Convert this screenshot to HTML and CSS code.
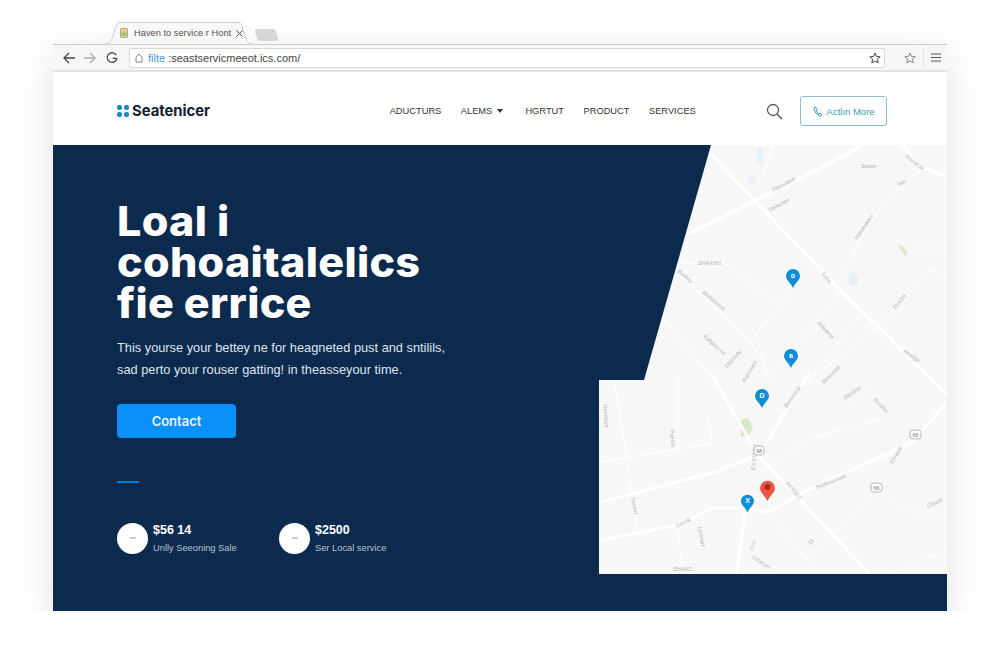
FILE: index.html
```html
<!DOCTYPE html>
<html lang="en">
<head>
    <meta charset="UTF-8">
    <meta name="viewport" content="width=device-width, initial-scale=1.0">
    <title>Haven to service r Hont</title>
    <link rel="stylesheet" href="styles.css">
</head>
<body>
    <div class="tabs">
        <div class="tab">
            <svg class="tab-shape" width="148" height="22" viewBox="0 0 148 22"><path d="M0 22C5 22 6 19 8 14L11 4C12 1.500 13 .5 16 .5H132C135 .5 136 1.500 137 4L141 16C142 20 144 22 148 22" fill="#f8f8f8" stroke="#cfcfcf"/></svg>
            <svg class="favicon" width="8" height="10" viewBox="0 0 8 10"><rect x="0.5" y="0.5" width="7" height="9" rx="1" fill="#e9d27c" stroke="#9a9a80" stroke-width="0.8"/><rect x="1.500" y="4.500" width="5" height="3.500" fill="#9cc07a"/></svg>
            <span class="tab-title">Haven to service r Hont</span>
            <svg class="tab-close" width="7" height="7" viewBox="0 0 7 7"><path d="M.5.5l6 6M6.500.5l-6 6" stroke="#444" stroke-width="1"/></svg>
        </div>
        <div class="tab-new"></div>
    </div>

    <div class="window">
        <div class="toolbar">
            <svg class="tool-icon" width="14" height="14" viewBox="0 0 14 14"><path d="M13 7H2M7 2L2 7l5 5" fill="none" stroke="#444" stroke-width="1.300"/></svg>
            <svg class="tool-icon" width="12" height="12" viewBox="0 0 12 12"><path d="M0 6h11M6 1l5 5-5 5" fill="none" stroke="#aaa" stroke-width="1.300"/></svg>
            <svg class="tool-icon reload" width="12" height="12" viewBox="0 0 13 13"><path d="M11.200 3.600A5.200 5.200 0 1 0 11.700 7H7.200" fill="none" stroke="#444" stroke-width="1.400"/></svg>
            <div class="address">
                <svg width="8" height="10" viewBox="0 0 8 10"><path d="M1 4l3-3 3 3v5H1z" fill="none" stroke="#777" stroke-width="0.9"/></svg>
                <span class="url"><span class="url-scheme">filte</span> :seastservicmeeot.ics.com/</span>
                <svg class="address-star" width="12" height="12" viewBox="0 0 12 12"><path d="M6 1l1.500 3.400 3.700.4-2.800 2.400.8 3.600L6 9l-3.200 1.800.8-3.600L.8 4.800l3.700-.4z" fill="none" stroke="#444" stroke-width="1"/></svg>
            </div>
            <svg class="ext-star" width="12" height="12" viewBox="0 0 12 12"><path d="M6 1l1.500 3.400 3.700.4-2.800 2.400.8 3.600L6 9l-3.200 1.800.8-3.600L.8 4.800l3.700-.4z" fill="none" stroke="#888" stroke-width="1"/></svg>
            <div class="menu-btn">
                <svg width="10" height="9" viewBox="0 0 10 9"><path d="M0 1h10M0 4.500h10M0 8h10" stroke="#555" stroke-width="1.200"/></svg>
            </div>
        </div>

        <header class="site-nav">
            <div class="logo">
                <span class="logo-mark"><i></i><i></i><i></i><i></i></span>
                Seatenicer
            </div>
            <nav class="nav-links">
                <a>ADUCTURS</a>
                <a>ALEMS <span class="caret"></span></a>
                <a>HGRTUT</a>
                <a>PRODUCT</a>
                <a>SERVICES</a>
            </nav>
            <svg class="search" width="17" height="17" viewBox="0 0 17 17"><circle cx="7" cy="7" r="5.500" fill="none" stroke="#555" stroke-width="1.300"/><path d="M11 11l5 5" stroke="#555" stroke-width="1.500"/></svg>
            <a class="action-btn">
                <svg width="10" height="11" viewBox="0 0 10 11"><path d="M2 1c-1 .6-1.200 1.800-.6 3.200C2.200 6.400 4 8.600 6.500 9.600c1 .4 2 .2 2.500-.6L7 7.200l-1.200.7C4.600 7 3.600 5.600 3.300 4.300l1-.9z" fill="none" stroke="#2b8fa8" stroke-width="1"/></svg>
                Actlın More
            </a>
        </header>

        <section class="hero">
            <div class="hero-copy">
                <h1>Loal i<br>cohoaitalelics<br>fie errice</h1>
                <p>This yourse your bettey ne for heagneted pust and sntilils,<br>sad perto your rouser gatting! in theasseyour time.</p>
                <a class="contact-btn">Contact</a>
                <div class="divider"></div>
                <div class="stats">
                    <div class="stat">
                        <span class="stat-icon"><i></i></span>
                        <div>
                            <strong>$56 14</strong>
                            <small>Unlly Seeoning Sale</small>
                        </div>
                    </div>
                    <div class="stat">
                        <span class="stat-icon"><i></i></span>
                        <div>
                            <strong>$2500</strong>
                            <small>Ser Local service</small>
                        </div>
                    </div>
                </div>
            </div>

            <svg class="map" width="348" height="429" viewBox="599 145 348 429">
                <defs>
                    <clipPath id="map-shape"><polygon points="711,145 947,145 947,574 599,574 599,380 644,380"/></clipPath>
                    <symbol id="pin" viewBox="0 0 14 19">
                        <path d="M7 0a7 7 0 0 1 7 7c0 4-4.500 6.500-7 12C4.500 13.500 0 11 0 7a7 7 0 0 1 7-7z"/>
                    </symbol>
                </defs>
                <g clip-path="url(#map-shape)">
                    <rect x="599" y="145" width="348" height="429" fill="#f7f7f8"/>
                    <!-- water and parks -->
                    <rect x="757" y="147" width="6" height="16" rx="3" fill="#e8f0f6"/>
                    <circle cx="752" cy="180" r="4" fill="#edf1f8"/>
                    <ellipse cx="853" cy="279" rx="5" ry="7" fill="#e6eff6"/>
                    <path d="M898 246l4-1 6 9-3 2z" fill="#dfe9c9"/>
                    <path d="M741 420l7-2 5 9-3 7-9 3z" fill="#d8e8cb"/>
                    <path d="M749 549l5-10 2 1-3 11z" fill="#dbe8f2"/>
                    <!-- minor roads -->
                    <g class="road-thin">
                        <path d="M773 145l-10 33"/>
                        <path d="M920 170l-37 33-26 42-14 33"/>
                        <path d="M683 263h40l27 19 23 20"/>
                        <path d="M677 272l70 66 13 17 13 30"/>
                        <path d="M663 318l54 67"/>
                        <path d="M793 288l-43 54"/>
                        <path d="M840 292l-37 46-30 34"/>
                        <path d="M930 270l-50 55-77 60"/>
                        <path d="M930 270l17 7"/>
                        <path d="M857 317l-50 68"/>
                        <path d="M907 248l40 0"/>
                        <path d="M615 385l23 147"/>
                        <path d="M678 375v73"/>
                        <path d="M708 418l4 25"/>
                        <path d="M602 462l70-12 40-7"/>
                        <path d="M882 418l-70 20-47 30"/>
                        <path d="M878 492l-43 40-33 30"/>
                        <path d="M878 492l34 20h35"/>
                        <path d="M892 572l55-22"/>
                        <path d="M872 388l-27 20"/>
                        <path d="M928 375l19 20"/>
                        <path d="M770 515l20 25 30 32"/>
                        <path d="M678 525l4 49"/>
                    </g>
                    <!-- main roads -->
                    <g class="road">
                        <path d="M690 233l63-31 54-27 53-28"/>
                        <path d="M712 155l45 48 83 87 77 75 30 30"/>
                        <path d="M903 145l14 20 30 12"/>
                        <path d="M712 375l46 80 110 117"/>
                        <path d="M808 375l-43 70-7 10-43 17-113 30"/>
                        <path d="M602 540l76-15 34-17h30l26 4 34-19 60-28 50-23 35-40"/>
                        <path d="M745 512l-8 60"/>
                    </g>
                    <!-- street labels -->
                    <g class="map-label">
                        <text transform="translate(773 192) rotate(-28)">Dlysivated</text>
                        <text transform="translate(770 212) rotate(-30)">Dlslocaer</text>
                        <text transform="translate(861 168)">Swast</text>
                        <text transform="translate(905 157) rotate(38)">Somerak</text>
                        <text transform="translate(899 186) rotate(-25)">hav</text>
                        <text transform="translate(857 240) rotate(-55)">Hanshaldev</text>
                        <text transform="translate(698 265)">SHAAHH</text>
                        <text transform="translate(677 272) rotate(40)">Barfrey</text>
                        <text transform="translate(702 293) rotate(40)">Wehaheest</text>
                        <text transform="translate(821 274) rotate(48)">Sasa</text>
                        <text transform="translate(817 323) rotate(48)">Asleemis</text>
                        <text transform="translate(895 310) rotate(-50)">SSASS</text>
                        <text transform="translate(703 337) rotate(42)">Rshpion.co</text>
                        <text transform="translate(727 368) rotate(-48)">Dfgheyfy</text>
                        <text transform="translate(745 383) rotate(-60)">Rehnrsert</text>
                        <text transform="translate(903 352) rotate(35)">Asedge</text>
                        <text transform="translate(824 384) rotate(-45)">Bsmnetal</text>
                        <text transform="translate(787 408) rotate(-55)">Bsmoetial</text>
                        <text transform="translate(603 404) rotate(85)">Tlenntzys</text>
                        <text transform="translate(670 430) rotate(85)">Paerzs</text>
                        <text transform="translate(631 497) rotate(80)">Tsesert</text>
                        <text transform="translate(755 470) rotate(-85)">E4 PSUFZ</text>
                        <text transform="translate(785 484) rotate(48)">PFSSEC</text>
                        <text transform="translate(817 489) rotate(-22)">Bddsoussaet</text>
                        <text transform="translate(893 464) rotate(-60)">Ehraete</text>
                        <text transform="translate(677 528) rotate(-30)">Dasug</text>
                        <text transform="translate(698 527) rotate(80)">Lsrsnart</text>
                        <text transform="translate(752 558) rotate(35)">Lsrsnsrt</text>
                        <text transform="translate(673 571)">SHAAC</text>
                        <text transform="translate(845 400) rotate(-35)">Dlestner</text>
                        <text transform="translate(873 400) rotate(45)">Rustlne</text>
                        <text transform="translate(928 508) rotate(-25)">Clewsr</text>
                        <text transform="translate(811 545) rotate(-50)">Dl</text>
                    </g>
                    <!-- route shields -->
                    <g class="shield">
                        <rect x="754" y="446" width="10" height="9" rx="3"/><text x="759" y="453">98</text>
                        <rect x="910" y="430" width="11" height="9" rx="3"/><text x="915.500" y="437">66</text>
                        <rect x="871" y="483" width="11" height="9" rx="3"/><text x="876.500" y="490">66</text>
                    </g>
                    <!-- pins -->
                    <g class="pin-blue">
                        <use href="#pin" x="786" y="269" width="14" height="19"/>
                        <use href="#pin" x="784" y="349" width="14" height="19"/>
                        <use href="#pin" x="755" y="389" width="14" height="19"/>
                        <use href="#pin" x="741" y="494" width="13" height="19"/>
                    </g>
                    <g class="pin-text">
                        <text x="793" y="278">o</text>
                        <text x="791" y="358">a</text>
                        <text x="762" y="398">D</text>
                        <text x="747.500" y="503">X</text>
                    </g>
                    <use class="pin-red" href="#pin" x="760" y="479" width="15" height="24"/>
                    <circle cx="767.500" cy="487" r="3" fill="#b02a20"/>
                </g>
            </svg>
        </section>
    </div>
</body>
</html>
```

FILE: styles.css
```css
body {
    margin: 0;
    background-color: #fff;
    font-family: "Liberation Sans", Arial, sans-serif;
    color: #333;
    overflow: hidden;
}
a {
    text-decoration: none;
}
.tabs {
    display: flex;
    align-items: flex-end;
    height: 22px;
    margin: 22px 0 0 53px;
    padding-left: 52px;
}
.tab {
    position: relative;
    display: flex;
    align-items: center;
    gap: 6px;
    box-sizing: border-box;
    width: 148px;
    height: 22px;
    padding: 0 11px 0 15px;
}
.tab-shape {
    position: absolute;
    top: 0;
    left: 0;
}
.favicon, .tab-close, .tab-title {
    position: relative;
    flex-shrink: 0;
}
.tab-title {
    width: 96px;
    font-size: 9.300px;
    white-space: nowrap;
    color: #555;
}
.tab-new {
    width: 21px;
    height: 12px;
    margin: 0 0 3px 3px;
    background: #d6d6d6;
    border-radius: 3px;
    transform: skewX(15deg);
}
.window {
    width: 894px;
    margin-left: 53px;
    box-shadow: 0 10px 36px rgba(0, 0, 0, 0.12);
}
.toolbar {
    display: flex;
    align-items: center;
    box-sizing: border-box;
    height: 28px;
    padding: 0 0 0 9px;
    background: #f6f6f6;
    border-top: 1px solid #ccc;
    border-bottom: 2px solid #e2e2e2;
    gap: 8px;
}
.tool-icon {
    flex-shrink: 0;
}
.reload {
    margin-left: 2px;
}
.address {
    display: flex;
    flex-shrink: 0;
    align-items: center;
    gap: 5px;
    box-sizing: border-box;
    width: 756px;
    height: 20px;
    margin-left: 3px;
    padding: 0 3px 0 5px;
    background: #fff;
    border: 1px solid #d8d8d8;
    border-radius: 2px;
}
.url {
    flex: 1;
    font-size: 11px;
    color: #444;
}
.url-scheme {
    color: #4a9cc4;
}
.ext-star {
    flex-shrink: 0;
    margin-left: 11px;
}
.menu-btn {
    display: flex;
    align-items: center;
    height: 20px;
    margin-left: -1px;
    padding-left: 7px;
    border-left: 1px solid #e4e4e4;
}
.site-nav {
    display: flex;
    align-items: center;
    box-sizing: border-box;
    height: 73px;
    padding: 5px 60px 0 64px;
    background: #fff;
}
.logo {
    display: flex;
    align-items: center;
    gap: 3px;
    width: 273px;
    font-family: Inter, sans-serif;
    font-size: 14.800px;
    font-weight: 700;
    color: #16202c;
}
.logo-mark {
    display: grid;
    grid-template-columns: 5px 5px;
    gap: 2px;
}
.logo-mark i {
    width: 5px;
    height: 5px;
    border-radius: 2px;
    background: #1b87c4;
}
.nav-links {
    display: flex;
    gap: 19.500px;
    width: 377px;
    font-size: 9.300px;
    color: #333;
}
.caret {
    display: inline-block;
    margin: 0 3px 1px 2px;
    border: 3px solid transparent;
    border-top: 4px solid #333;
    border-bottom: none;
}
.search {
    margin-right: 17px;
}
.action-btn {
    display: flex;
    align-items: center;
    justify-content: center;
    gap: 4px;
    box-sizing: border-box;
    width: 87px;
    height: 30px;
    border: 1px solid #8fbfcc;
    border-radius: 3px;
    font-size: 9.500px;
    color: #3d9cb5;
}
.hero {
    position: relative;
    height: 466px;
    background-color: #0b2a4d;
}
.hero-copy {
    box-sizing: border-box;
    height: 100%;
    padding: 56px 0 0 64px;
    color: #fff;
}
.hero-copy h1 {
    margin: 0;
    font-family: Inter, sans-serif;
    font-size: 41px;
    line-height: 41px;
    font-weight: 800;
    letter-spacing: 0.300px;
    transform: scaleX(1.05);
    transform-origin: left;
}
.hero-copy p {
    margin: 13px 0 0;
    font-size: 12.800px;
    line-height: 22px;
    color: #dfe6ee;
}
.contact-btn {
    display: flex;
    align-items: center;
    justify-content: center;
    width: 119px;
    height: 34px;
    margin-top: 23px;
    background: #0a90fb;
    border-radius: 4px;
    font-family: Inter, sans-serif;
    font-size: 13px;
    font-weight: 600;
    color: #e8f4ff;
}
.divider {
    width: 22px;
    height: 2px;
    margin-top: 43px;
    background: #0e7ccb;
}
.stats {
    display: flex;
    margin-top: 39px;
}
.stat {
    display: flex;
    align-items: center;
    gap: 5px;
    width: 162px;
}
.stat-icon {
    display: flex;
    align-items: center;
    justify-content: center;
    width: 31px;
    height: 31px;
    background: #fff;
    border-radius: 50%;
}
.stat-icon i {
    width: 6px;
    height: 2px;
    background: #ccc;
}
.stat strong {
    display: block;
    font-size: 12.500px;
    line-height: 16px;
}
.stat small {
    display: block;
    margin-top: 4px;
    font-size: 9.300px;
    line-height: 12px;
    color: #b8c6d6;
}
.map {
    position: absolute;
    top: 0;
    right: 0;
}
.road, .road-thin {
    fill: none;
    stroke: #fff;
    stroke-linecap: round;
    stroke-linejoin: round;
}
.road {
    stroke-width: 3.200;
}
.road-thin {
    stroke-width: 1.400;
    opacity: 0.8;
}
.map-label {
    font-size: 5.500px;
    fill: #b0b3b7;
}
.shield rect {
    fill: #fff;
    stroke: #9a9a9a;
    stroke-width: 0.700;
}
.shield text {
    font-size: 5.500px;
    text-anchor: middle;
    fill: #777;
}
.pin-blue {
    fill: #0f8dd6;
}
.pin-red {
    fill: #ef5344;
}
.pin-text {
    font-size: 7px;
    font-weight: 700;
    text-anchor: middle;
    fill: #fff;
}
```
